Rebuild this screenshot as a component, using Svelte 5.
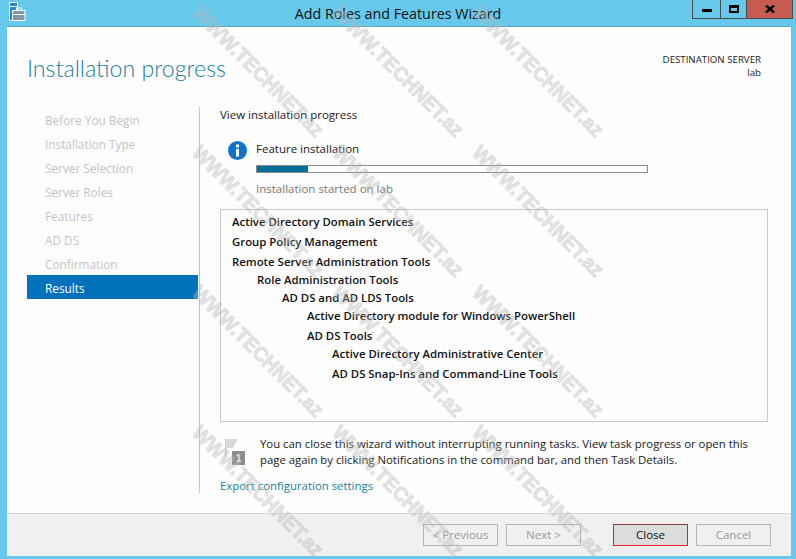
<script>
  const steps = ['Before You Begin','Installation Type','Server Selection','Server Roles','Features','AD DS','Confirmation'];
  const tree = [
    { t: 'Active Directory Domain Services', l: 0, g: 0 },
    { t: 'Group Policy Management', l: 0, g: 2 },
    { t: 'Remote Server Administration Tools', l: 0, g: 2 },
    { t: 'Role Administration Tools', l: 1, g: 0 },
    { t: 'AD DS and AD LDS Tools', l: 2, g: 0 },
    { t: 'Active Directory module for Windows PowerShell', l: 3, g: 0 },
    { t: 'AD DS Tools', l: 3, g: 2 },
    { t: 'Active Directory Administrative Center', l: 4, g: 0 },
    { t: 'AD DS Snap-Ins and Command-Line Tools', l: 4, g: 2 }
  ];
  const marks = Array.from({ length: 12 }, (_, i) => i);
</script>

<div class="window">
  <header class="titlebar">
    <svg class="appicon" width="17" height="20" viewBox="0 0 17 20">
      <rect x="0.5" y="0.5" width="8" height="18" fill="#2f86cf" stroke="#fff"/>
      <rect x="1" y="4" width="7" height="1" fill="#fff"/>
      <rect x="3.5" y="8.5" width="12.5" height="10" fill="#7f97a8" stroke="#fff"/>
      <path d="M7.5 8V6h5v2" fill="none" stroke="#fff"/>
      <rect x="4" y="12" width="12" height="1" fill="#fff"/>
    </svg>
    <div class="title">Add Roles and Features Wizard</div>
    <div class="caption">
      <div class="cbtn min"><span></span></div>
      <div class="cbtn max"><span></span></div>
      <div class="cbtn close">
        <svg width="10" height="8" viewBox="0 0 10 8"><path d="M1 0.5 9 7.5M9 0.5 1 7.5" stroke="#000" stroke-width="2.4"/></svg>
      </div>
    </div>
  </header>

  <div class="client">
    <div class="head">
      <h1>Installation progress</h1>
      <div class="dest">DESTINATION SERVER<br/>lab</div>
    </div>

    <div class="body">
      <nav class="steps">
        {#each steps as s}<div class="step">{s}</div>{/each}
        <div class="step active">Results</div>
      </nav>
      <main class="pane">
        <div class="lead">View installation progress</div>
        <div class="status">
          <svg class="info" width="19" height="19" viewBox="0 0 19 19">
            <circle cx="9.5" cy="9.5" r="9.5" fill="#0e73c9"/>
            <rect x="8" y="3.5" width="3" height="3" fill="#fff"/>
            <rect x="8" y="8" width="3" height="7.5" fill="#fff"/>
          </svg>
          <div class="statusbody">
            <div class="feat">Feature installation</div>
            <div class="bar"><div class="fill" style="width:13%"></div></div>
            <div class="started">Installation started on lab</div>
          </div>
        </div>
        <div class="tree">
          {#each tree as r}
            <div class="row" style="margin-left:{r.l * 25}px;margin-top:{r.g}px">{r.t}</div>
          {/each}
        </div>
        <div class="note">
          <svg class="flag" width="24" height="26" viewBox="0 0 24 26">
            <rect x="0" y="0" width="1.5" height="18" fill="#cfcfcf"/>
            <path d="M1.5 0H13L8 9H1.5Z" fill="#d9d9d9"/>
            <rect x="7" y="12" width="13" height="14" fill="#8e8e8e"/>
            <text x="13.5" y="23" font-size="10" font-weight="700" fill="#e8e8e8" text-anchor="middle" font-family="Liberation Sans">1</text>
          </svg>
          <p>You can close this wizard without interrupting running tasks. View task progress or open this page again by clicking Notifications in the command bar, and then Task Details.</p>
        </div>
        <div class="export">Export configuration settings</div>
      </main>
    </div>

    <footer class="foot">
      <div class="btn off">&lt; Previous</div>
      <div class="btn off">Next &gt;</div>
      <div class="btn def">Close</div>
      <div class="btn off">Cancel</div>
    </footer>
  </div>

  <div class="marks">
    {#each marks as m}<div class="cell"><span>WWW.TECHNET.az</span></div>{/each}
  </div>
</div>

<style>
  :global(body) { margin: 0; }
  .window {
    position: relative;
    width: 796px;
    height: 559px;
    overflow: hidden;
    background: #66c9ec;
    display: flex;
    flex-direction: column;
    font-family: "Open Sans", "Noto Sans", sans-serif;
    font-size: 12px;
    color: #1a1a1a;
  }
  .titlebar {
    height: 27px;
    flex: none;
    display: grid;
    grid-template-columns: 1fr auto 1fr;
    align-items: center;
  }
  .appicon { margin: 0 0 3px 9px; }
  .title { font-size: 14.3px; color: #111; line-height: 27px; }
  .caption { justify-self: end; align-self: start; display: flex; margin-right: 3px; height: 19px; }
  .cbtn {
    box-sizing: border-box;
    height: 19px;
    border: 1px solid #4a4a4a;
    border-top: none;
    border-right: none;
    display: flex;
    align-items: center;
    justify-content: center;
  }
  .min { width: 28px; }
  .min span { width: 10px; height: 3px; background: #000; margin-top: 3px; }
  .max { width: 26px; }
  .max span { box-sizing: border-box; width: 10px; height: 8px; border: 2px solid #000; border-top-width: 3px; }
  .close { width: 47px; background: #c45c50; border-right: 1px solid #4a4a4a; }

  .client {
    flex: 1;
    margin: 0 5px 3px 7px;
    background: #fdfdfd;
    box-shadow: 0 -1px 0 #5aa9c6;
    display: flex;
    flex-direction: column;
    min-height: 0;
  }
  .head { height: 80px; flex: none; display: flex; justify-content: space-between; padding: 0 30px 0 20px; }
  h1 { margin: 24px 0 0; font-family: Lato, "Open Sans", sans-serif; font-size: 23.2px; font-weight: 300; color: #1a7f9f; line-height: 34px; }
  .dest { margin-top: 26px; text-align: right; font-size: 9.7px; line-height: 13px; color: #222; }

  .body { flex: 1; display: flex; padding: 0 0 20px 20px; min-height: 0; }
  .steps { width: 171px; flex: none; }
  .step { height: 24px; line-height: 26px; padding-left: 18px; color: #c4c4c4; font-size: 11.8px; }
  .active { background: #0072bc; color: #fff; }
  .pane { flex: 1; margin-left: 1px; border-left: 1px solid #c4c4c4; padding-left: 20px; min-width: 0; }
  .lead { line-height: 16px; margin-top: 0; font-size: 11.5px; }
  .status { display: flex; margin: 18px 0 0 8px; gap: 9px; }
  .statusbody { width: 392px; }
  .feat { line-height: 16px; font-size: 11.5px; }
  .bar { box-sizing: border-box; height: 8px; margin-top: 8px; border: 1px solid #8a8a8a; background: #fff; }
  .fill { height: 100%; background: #00709a; }
  .started { margin-top: 8px; line-height: 16px; color: #777; font-size: 11.5px; }
  .tree {
    box-sizing: border-box;
    width: 548px;
    height: 213px;
    margin-top: 12px;
    border: 1px solid #c8c8c8;
    padding: 3px 11px;
  }
  .row { font-weight: 600; font-size: 11.38px; line-height: 18px; color: #111; white-space: nowrap; }
  .note { display: flex; margin: 14px 0 0 5px; gap: 11px; }
  .flag { flex: none; margin-top: 3px; }
  .note p { margin: 0; width: 495px; line-height: 16px; font-size: 11.37px; }
  .export { margin-top: 10px; line-height: 16px; color: #1a7f9f; font-size: 11.4px; }

  .foot {
    height: 43px;
    flex: none;
    box-sizing: border-box;
    border-top: 1px solid #d8d8d8;
    background: #f0f0f0;
    display: flex;
    align-items: center;
    justify-content: flex-end;
    gap: 8px;
    padding: 0 20px 0 0;
  }
  .btn {
    box-sizing: border-box;
    width: 75px;
    height: 22px;
    line-height: 20px;
    text-align: center;
    border: 1px solid #b5b5b5;
    font-size: 11.5px;
  }
  .off { color: #9a9a9a; }
  .def { background: #dcdcdc; color: #111; border-color: #e3202a; border-top-color: #8a3a3c; margin: 0 0 0 24px; }

  .marks {
    position: absolute;
    left: 188px;
    top: 1px;
    display: grid;
    grid-template-columns: repeat(3, 140px);
    grid-auto-rows: 140px;
    pointer-events: none;
  }
  .cell { display: flex; align-items: center; justify-content: center; }
  .cell span {
    transform: rotate(45deg);
    white-space: nowrap;
    font-family: "Liberation Sans", sans-serif;
    font-weight: 700;
    font-size: 19.5px;
    color: rgba(185, 185, 185, 0.36);
    -webkit-text-stroke: 1px rgba(185, 185, 185, 0.36);
    filter: blur(0.5px);
  }
</style>
